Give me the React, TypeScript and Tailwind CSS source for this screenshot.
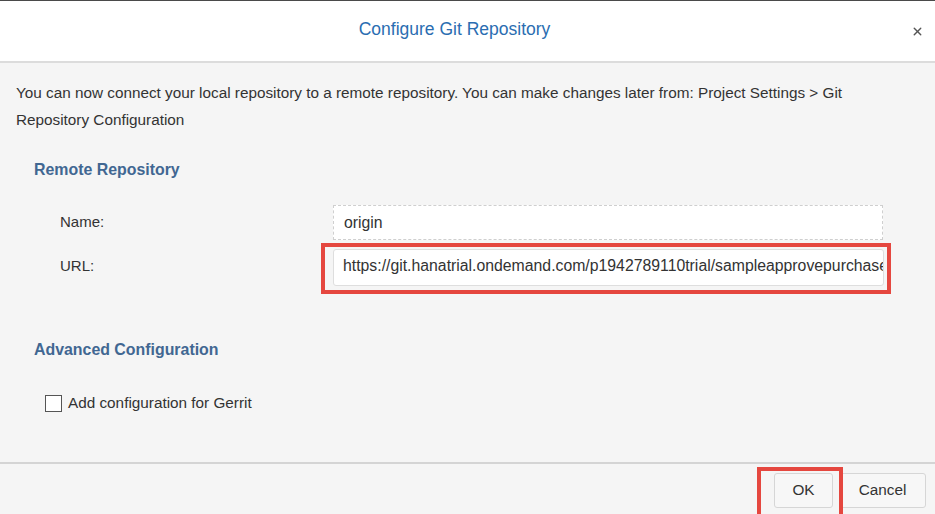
import { X } from 'lucide-react';

export default function App() {
  return (
    <div className="relative w-[935px] h-[514px] overflow-hidden bg-[#f5f5f5] text-[#333] font-['Liberation_Sans',Arial,sans-serif] border-t border-[#4a4a4a]">
      {/* Header */}
      <div className="relative h-[62px] bg-white border-b-2 border-[#dcdcdc] flex items-center justify-center pr-[26px]">
        <h1 className="text-[17.5px] text-[#2a6db1] -mt-[3px]">Configure Git Repository</h1>
        <button className="absolute right-[11px] top-[24px] text-[#555]">
          <X className="w-[13px] h-[13px]" strokeWidth={2.5} />
        </button>
      </div>

      {/* Body */}
      <div className="h-[399px] px-4 pt-[16px]">
        <p className="text-[15.3px] leading-[27px]">
          You can now connect your local repository to a remote repository. You can make changes later from: Project Settings &gt; Git Repository Configuration
        </p>

        <div className="pl-[18px] mt-[25px]">
          <h2 className="text-[15.9px] font-bold text-[#416792]">Remote Repository</h2>

          <div className="mt-[23px] flex flex-col gap-[9px]">
            <div className="flex items-center">
              <label className="w-[299px] pl-[26px] text-[15px]">Name:</label>
              <div className="w-[550px] h-[35px] bg-white border border-dashed border-[#cfcfcf] flex items-center px-[10px] text-[15.8px]">
                origin
              </div>
            </div>
            <div className="flex items-center">
              <label className="w-[299px] pl-[26px] pb-[3px] text-[15px]">URL:</label>
              <div className="w-[551px] h-[37px] bg-white border border-[#dedede] rounded-[3px] flex items-center px-[9px] pb-[3px] text-[15.8px] overflow-hidden whitespace-nowrap">
                https://git.hanatrial.ondemand.com/p1942789110trial/sampleapprovepurchaseorder
              </div>
            </div>
          </div>

          <h2 className="mt-[52px] text-[15.9px] font-bold text-[#416792]">Advanced Configuration</h2>

          <label className="mt-[30px] ml-[11px] flex items-center gap-[6px] text-[15.3px]">
            <span className="w-[17px] h-[17px] border border-[#555] bg-white" />
            Add configuration for Gerrit
          </label>
        </div>
      </div>

      {/* Footer */}
      <div className="border-t-2 border-[#d4d4d4] h-[52px] flex justify-end items-start gap-[6px] pt-[9px] pr-[9px]">
        <button className="w-[59px] h-[35px] bg-[#f7f7f7] border border-[#d6d6d6] rounded-[3px] text-[15.3px]">OK</button>
        <button className="w-[87px] h-[35px] bg-[#f7f7f7] border border-[#d6d6d6] rounded-[3px] text-[15.3px]">Cancel</button>
      </div>

      {/* Highlight annotations */}
      <div className="absolute left-[321px] top-[242px] w-[570px] h-[51px] border-[4px] border-[#e5473f] pointer-events-none" />
      <div className="absolute left-[757px] top-[466px] w-[86px] h-[52px] border-[4px] border-[#e5473f] pointer-events-none" />
    </div>
  );
}
